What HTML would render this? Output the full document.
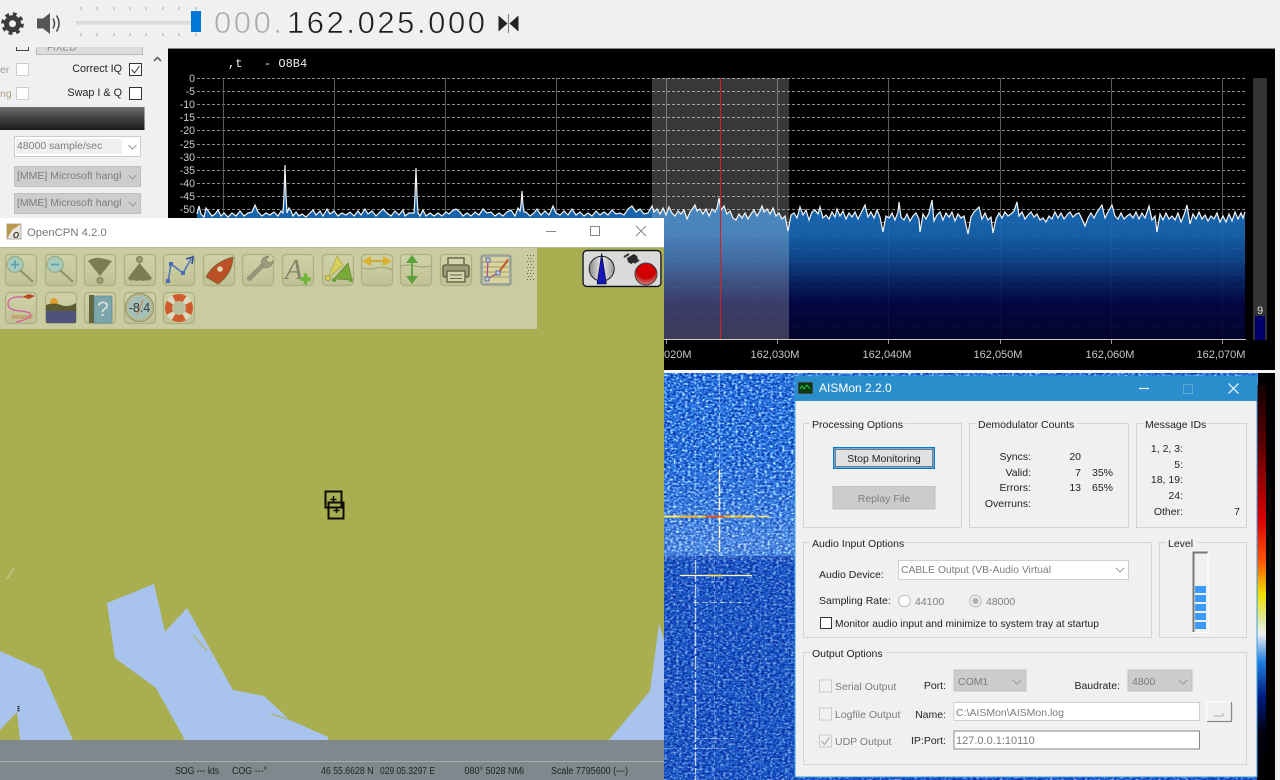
<!DOCTYPE html>
<html><head><meta charset="utf-8"><title>SDR AISMon OpenCPN</title>
<style>
html,body{margin:0;padding:0;background:#f0f0f0;width:1280px;height:780px;overflow:hidden}
svg{display:block;position:absolute;left:0;top:0;font-family:"Liberation Sans",sans-serif;filter:blur(.3px)}
.t{font-size:10.5px;fill:#222}
.g{font-size:10.5px;fill:#7c7c7c}
.a{font-size:10.6px;fill:#ccc;text-anchor:end}
.x{font-size:11px;fill:#c8c8c8;text-anchor:middle}
.s{font-size:10.500px;fill:#1c2224}
.box{fill:none;stroke:#d4d4d4}
.chev{fill:none;stroke:#999;stroke-width:1}
.ib{fill:url(#ib);stroke:#adaf80;stroke-width:1.200}
</style></head><body>
<svg width="1280" height="780" viewBox="0 0 1280 780" xmlns="http://www.w3.org/2000/svg">
<defs>
<linearGradient id="spec" x1="0" y1="200" x2="0" y2="339" gradientUnits="userSpaceOnUse">
<stop offset="0" stop-color="#1b6fbd"/><stop offset=".24" stop-color="#1766b2"/><stop offset=".42" stop-color="#0f4a92"/><stop offset=".6" stop-color="#082263"/><stop offset=".74" stop-color="#030646"/><stop offset="1" stop-color="#05052c"/>
</linearGradient>
<linearGradient id="bar" x1="0" y1="0" x2="0" y2="1"><stop offset="0" stop-color="#6d6d6d"/><stop offset=".55" stop-color="#3c3c3c"/><stop offset="1" stop-color="#1c1c1e"/></linearGradient>
<linearGradient id="ib" x1="0" y1="0" x2="0" y2="1"><stop offset="0" stop-color="#cfd1a8"/><stop offset="1" stop-color="#c0c295"/></linearGradient>
<linearGradient id="cbar" x1="0" y1="385" x2="0" y2="780" gradientUnits="userSpaceOnUse">
<stop offset="0" stop-color="#150000"/><stop offset=".14" stop-color="#550000"/><stop offset=".34" stop-color="#d80000"/><stop offset=".45" stop-color="#ff5a00"/><stop offset=".53" stop-color="#f0e000"/><stop offset=".6" stop-color="#dfe8b0"/><stop offset=".63" stop-color="#eeeeee"/><stop offset=".7" stop-color="#2080e0"/><stop offset=".79" stop-color="#001c80"/><stop offset=".88" stop-color="#000010"/><stop offset="1" stop-color="#000"/>
</linearGradient>
<linearGradient id="band" x1="0" y1="373" x2="0" y2="560" gradientUnits="userSpaceOnUse">
<stop offset="0" stop-color="#fff" stop-opacity="0"/><stop offset=".45" stop-color="#fff" stop-opacity=".01"/><stop offset=".68" stop-color="#fff" stop-opacity=".07"/><stop offset=".95" stop-color="#fff" stop-opacity=".18"/><stop offset="1" stop-color="#fff" stop-opacity=".08"/>
</linearGradient>
<radialGradient id="rd" cx=".5" cy=".25" r=".8"><stop offset="0" stop-color="#e00000"/><stop offset=".55" stop-color="#c80000"/><stop offset="1" stop-color="#d8a0a0"/></radialGradient>
<linearGradient id="gc" x1="0" x2="1" y1="0" y2="0"><stop offset="0" stop-color="#888"/><stop offset=".5" stop-color="#eee"/><stop offset="1" stop-color="#999"/></linearGradient>
<filter id="noise" x="0" y="0" width="100%" height="100%" color-interpolation-filters="sRGB">
<feTurbulence type="fractalNoise" baseFrequency="0.34 0.48" numOctaves="2" seed="7" result="n"/>
<feColorMatrix in="n" type="matrix" values="0 2.2 0 0 -0.6  0 2.2 0 0 -0.6  0 2.2 0 0 -0.6  0 0 0 0 1"/>
<feComponentTransfer>
<feFuncR type="table" tableValues="0.03 0.08 0.13 0.19 0.33 0.75"/>
<feFuncG type="table" tableValues="0.2 0.3 0.41 0.49 0.62 0.88"/>
<feFuncB type="table" tableValues="0.66 0.74 0.84 0.9 0.96 1"/>
</feComponentTransfer>
</filter>
</defs>

<!-- base -->
<rect width="1280" height="780" fill="#f0f0f0"/>

<!-- left panel -->
<rect x="16.500" y="40" width="12" height="10.500" fill="#f0f0f0" stroke="#444"/>
<rect x="36.500" y="38" width="106" height="16.500" fill="#dcdcdc" stroke="#bbb"/>
<text x="47" y="50.500" font-size="10" fill="#888">FIXED</text>
<rect x="0" y="0" width="168" height="47" fill="#f0f0f0"/>
<text x="0" y="73" font-size="10.500" fill="#9a9a9a">er</text>
<text x="0" y="97" font-size="10.500" fill="#b09a80">ng</text>
<rect x="16.500" y="63.500" width="12" height="12" fill="#fff" stroke="#ccc"/>
<rect x="16.500" y="87.500" width="12" height="12" fill="#fff" stroke="#ccc"/>
<text x="122" y="72" class="t" style="font-size:10.800px;text-anchor:end">Correct IQ</text>
<text x="122" y="96" class="t" style="font-size:10.800px;text-anchor:end">Swap I &amp; Q</text>
<rect x="129.500" y="63.500" width="12" height="12" fill="#fff" stroke="#333"/>
<path d="M131.500 69.500l3 3.500 5-7" fill="none" stroke="#333"/>
<rect x="129.500" y="87.500" width="12" height="12" fill="#fff" stroke="#333"/>
<rect x="0" y="107" width="144.500" height="23" fill="url(#bar)"/>
<rect x="14.500" y="136.500" width="126" height="20" fill="#fff" stroke="#ccc"/>
<rect x="16" y="139" width="106" height="15" fill="#f0f0f0"/>
<text x="17" y="149" class="g" style="font-size:10.500px">48000 sample/sec</text>
<path d="M128.500 145l4 4 4-4" class="chev"/>
<rect x="14.500" y="166.500" width="126" height="20" fill="#cdcdcd" stroke="#c0c0c0"/>
<text x="17" y="179" class="g" style="font-size:10.500px">[MME] Microsoft hangl</text>
<path d="M128.500 175l4 4 4-4" class="chev"/>
<rect x="14.500" y="193.500" width="126" height="20" fill="#cdcdcd" stroke="#c0c0c0"/>
<text x="17" y="206" class="g" style="font-size:10.500px">[MME] Microsoft hangl</text>
<path d="M128.500 202l4 4 4-4" class="chev"/>
<path d="M154 61l3.500-3.500 3.500 3.500" fill="none" stroke="#666" stroke-width="1.600"/>

<!-- top bar -->
<circle cx="12.500" cy="23.700" r="9.600" fill="none" stroke="#3c3c3c" stroke-width="3.400" stroke-dasharray="3.800 3.740"/>
<circle cx="12.500" cy="23.700" r="6" fill="none" stroke="#3c3c3c" stroke-width="5"/>
<circle cx="12.500" cy="23.700" r="2.600" fill="#f0f0f0"/>
<path d="M37 18.500h6l7-5.500v21l-7-5.500h-6z" fill="#555"/>
<path d="M53 18.500q3 5 0 10M56.500 15.500q5 8 0 16" fill="none" stroke="#444" stroke-width="1.500"/>
<rect x="76.500" y="21.500" width="116" height="2.500" fill="#e2e2e2" stroke="#d4d4d4"/>
<path d="M81 7v3M97 7v3M114 7v3M130 7v3M146 7v3M163 7v3M179 7v3M196 7v3M81 33v3M97 33v3M114 33v3M130 33v3M146 33v3M163 33v3M179 33v3M196 33v3" stroke="#aaa"/>
<rect x="191" y="11" width="10" height="21" fill="#0078d7"/>
<text x="214" y="33" font-size="31" fill="#ababab" stroke="#f0f0f0" stroke-width=".7" textLength="68" lengthAdjust="spacing">000.</text>
<text x="287" y="33" font-size="31" fill="#1c1c1c" stroke="#f0f0f0" stroke-width=".6" textLength="198" lengthAdjust="spacing">162.025.000</text>
<path d="M498.500 15.500l9 8-9 8zM518.500 15.500l-9 8 9 8z" fill="#222"/>
<path d="M508.500 14v19" stroke="#888" stroke-width="1.200"/>

<!-- spectrum -->
<rect x="168" y="48" width="1107" height="322" fill="#000"/>
<rect x="168" y="48" width="1107" height="1" fill="#888"/>
<g stroke="#8a8a8a" stroke-dasharray="3 2">
<path d="M197 78.500H1245M197 91.500H1245M197 104.500H1245M197 117.500H1245M197 130.500H1245M197 144.500H1245M197 157.500H1245M197 170.500H1245M197 183.500H1245M197 196.500H1245M197 209.500H1245M197 222.500H1245M197 235.500H1245M197 248.500H1245M197 261.500H1245M197 274.500H1245M197 287.500H1245M197 300.500H1245M197 313.500H1245M197 326.500H1245"/>
</g>
<path d="M223.500 78V339M334.500 78V339M445.500 78V339M556.500 78V339M666.500 78V339M777.500 78V339M888.500 78V339M1000.500 78V339M1111.500 78V339M1222.500 78V339" stroke="#5c5c5c"/>
<path fill="url(#spec)" fill-opacity=".93" stroke="none" d="M197 339L197 214 199 206 201 214 204 217 206 208 209 212 212 216 215 214 218 210 221 216 224 213 228 217 232 213 236 216 240 211 244 216 248 213 252 212 255 205 258 212 262 216 266 213 270 215 274 212 278 216 281 211 283 213 284 195 285 165 286 195 287 213 289 208 291 211 293 216 296 212 299 216 302 214 306 217 310 213 313 210 316 215 320 211 323 216 327 209 330 214 334 211 338 216 342 213 346 215 350 212 354 216 358 211 361 215 365 209 368 214 372 211 376 216 380 212 383 209 387 213 391 216 395 211 399 215 403 210 405 216 409 213 412 213 414 213 415 196 416 168 417 196 418 213 420 216 423 210 426 216 430 213 434 216 438 213 442 216 446 212 449 214 452 211 456 209 460 212 463 216 467 213 471 216 475 212 479 215 483 209 487 213 491 212 495 216 499 213 503 216 507 212 511 210 515 216 518 208 520 211 521 205 522 191 523 205 524 212 526 212 530 216 534 213 537 209 541 215 545 211 549 215 553 206 556 213 560 215 564 211 568 215 572 209 576 215 580 212 584 216 588 213 592 216 596 211 600 215 604 212 608 215 612 210 616 214 620 213 624 215 628 209 632 206 636 212 640 209 644 214 648 213 652 206 654 212 657 209 660 214 663 208 666 215 669 207 672 213 675 216 678 211 681 214 684 210 687 219 690 212 693 208 695 205 697 211 700 209 703 214 706 209 709 216 712 209 715 212 717 208 719 198 721 210 724 206 727 214 730 211 733 218 736 220 739 214 742 218 745 213 748 219 751 214 754 210 757 216 760 211 762 206 764 212 767 209 770 214 773 208 776 216 779 213 782 219 785 216 788 231 791 215 794 213 797 218 800 207 803 215 806 210 809 220 812 212 815 210 818 214 820 207 823 218 826 215 829 219 832 212 835 217 837 209 840 216 843 211 846 219 849 213 852 217 855 212 858 219 861 213 865 205 868 217 871 212 874 218 877 210 880 217 883 232 886 216 889 218 892 213 895 220 898 212 899 202 901 217 904 220 907 214 910 221 913 216 916 213 919 219 920 232 923 214 926 219 929 213 932 200 934 221 937 215 940 212 943 220 946 213 949 217 952 212 955 221 958 214 961 218 964 216 968 234 971 217 974 212 979 207 982 219 985 213 988 220 991 217 993 233 996 219 999 213 1002 218 1005 212 1008 216 1011 214 1014 211 1017 202 1019 216 1022 212 1025 219 1028 215 1031 212 1034 217 1037 214 1040 220 1043 218 1046 222 1049 216 1052 219 1055 212 1058 218 1061 213 1064 219 1067 215 1070 212 1073 217 1076 214 1079 213 1082 219 1085 226 1088 218 1091 213 1094 218 1097 212 1102 205 1105 218 1108 212 1112 205 1115 216 1118 219 1121 213 1124 219 1127 216 1130 214 1133 218 1136 212 1139 219 1142 213 1145 218 1149 206 1152 220 1155 216 1157 232 1160 214 1163 220 1166 213 1169 219 1172 216 1175 220 1178 213 1181 222 1184 215 1187 205 1190 224 1193 214 1196 219 1199 212 1202 219 1205 215 1208 221 1211 216 1214 219 1217 213 1220 222 1223 216 1226 222 1229 214 1232 221 1235 212 1238 219 1241 213 1243 218 1245 212 1245 339Z"/>
<path fill="none" stroke="#f4f4f4" stroke-width="1.200" d="M197 214L199 206 201 214 204 217 206 208 209 212 212 216 215 214 218 210 221 216 224 213 228 217 232 213 236 216 240 211 244 216 248 213 252 212 255 205 258 212 262 216 266 213 270 215 274 212 278 216 281 211 283 213 284 195 285 165 286 195 287 213 289 208 291 211 293 216 296 212 299 216 302 214 306 217 310 213 313 210 316 215 320 211 323 216 327 209 330 214 334 211 338 216 342 213 346 215 350 212 354 216 358 211 361 215 365 209 368 214 372 211 376 216 380 212 383 209 387 213 391 216 395 211 399 215 403 210 405 216 409 213 412 213 414 213 415 196 416 168 417 196 418 213 420 216 423 210 426 216 430 213 434 216 438 213 442 216 446 212 449 214 452 211 456 209 460 212 463 216 467 213 471 216 475 212 479 215 483 209 487 213 491 212 495 216 499 213 503 216 507 212 511 210 515 216 518 208 520 211 521 205 522 191 523 205 524 212 526 212 530 216 534 213 537 209 541 215 545 211 549 215 553 206 556 213 560 215 564 211 568 215 572 209 576 215 580 212 584 216 588 213 592 216 596 211 600 215 604 212 608 215 612 210 616 214 620 213 624 215 628 209 632 206 636 212 640 209 644 214 648 213 652 206 654 212 657 209 660 214 663 208 666 215 669 207 672 213 675 216 678 211 681 214 684 210 687 219 690 212 693 208 695 205 697 211 700 209 703 214 706 209 709 216 712 209 715 212 717 208 719 198 721 210 724 206 727 214 730 211 733 218 736 220 739 214 742 218 745 213 748 219 751 214 754 210 757 216 760 211 762 206 764 212 767 209 770 214 773 208 776 216 779 213 782 219 785 216 788 231 791 215 794 213 797 218 800 207 803 215 806 210 809 220 812 212 815 210 818 214 820 207 823 218 826 215 829 219 832 212 835 217 837 209 840 216 843 211 846 219 849 213 852 217 855 212 858 219 861 213 865 205 868 217 871 212 874 218 877 210 880 217 883 232 886 216 889 218 892 213 895 220 898 212 899 202 901 217 904 220 907 214 910 221 913 216 916 213 919 219 920 232 923 214 926 219 929 213 932 200 934 221 937 215 940 212 943 220 946 213 949 217 952 212 955 221 958 214 961 218 964 216 968 234 971 217 974 212 979 207 982 219 985 213 988 220 991 217 993 233 996 219 999 213 1002 218 1005 212 1008 216 1011 214 1014 211 1017 202 1019 216 1022 212 1025 219 1028 215 1031 212 1034 217 1037 214 1040 220 1043 218 1046 222 1049 216 1052 219 1055 212 1058 218 1061 213 1064 219 1067 215 1070 212 1073 217 1076 214 1079 213 1082 219 1085 226 1088 218 1091 213 1094 218 1097 212 1102 205 1105 218 1108 212 1112 205 1115 216 1118 219 1121 213 1124 219 1127 216 1130 214 1133 218 1136 212 1139 219 1142 213 1145 218 1149 206 1152 220 1155 216 1157 232 1160 214 1163 220 1166 213 1169 219 1172 216 1175 220 1178 213 1181 222 1184 215 1187 205 1190 224 1193 214 1196 219 1199 212 1202 219 1205 215 1208 221 1211 216 1214 219 1217 213 1220 222 1223 216 1226 222 1229 214 1232 221 1235 212 1238 219 1241 213 1243 218 1245 212"/>
<rect x="652" y="78" width="137" height="261" fill="#fff" fill-opacity=".22"/>
<path d="M720.500 78V339" stroke="#d82020"/>
<path d="M197 339.500H1246" stroke="#ccc"/>
<path d="M223.500 340v4M334.500 340v4M445.500 340v4M556.500 340v4M666.500 340v4M777.500 340v4M888.500 340v4M1000.500 340v4M1111.500 340v4M1222.500 340v4" stroke="#999"/>
<g>
<text x="195" y="82" class="a">0</text><text x="195" y="95" class="a">-5</text><text x="195" y="108" class="a">-10</text><text x="195" y="121" class="a">-15</text><text x="195" y="134" class="a">-20</text><text x="195" y="148" class="a">-25</text><text x="195" y="161" class="a">-30</text><text x="195" y="174" class="a">-35</text><text x="195" y="187" class="a">-40</text><text x="195" y="200" class="a">-45</text><text x="195" y="213" class="a">-50</text>
</g>
<text x="228" y="67" font-size="12" fill="#eee" xml:space="preserve" style="white-space:pre;font-family:'Liberation Mono',monospace">,t   - O8B4</text>
<text x="775" y="358" class="x">162,030M</text><text x="887" y="358" class="x">162,040M</text><text x="998" y="358" class="x">162,050M</text><text x="1110" y="358" class="x">162,060M</text><text x="1221" y="358" class="x">162,070M</text>
<text x="664" y="358" fill="#c8c8c8" font-size="11">020M</text>
<rect x="1253" y="78" width="14" height="262" fill="#333"/>
<rect x="1255" y="316" width="10" height="24" fill="#00006a"/>
<text x="1260" y="314" text-anchor="middle" font-size="11" fill="#ddd">9</text>

<!-- right divider + waterfall -->
<rect x="664" y="370" width="616" height="3" fill="#f4f4f4"/>
<rect x="664" y="373" width="611" height="407" fill="#000"/>
<rect x="664" y="373" width="594" height="407" filter="url(#noise)"/>
<rect x="664" y="373" width="594" height="187" fill="url(#band)"/>
<rect x="664" y="556" width="594" height="224" fill="#00158a" opacity=".28"/>
<rect x="1257" y="385" width="9" height="395" fill="url(#cbar)"/>
<rect x="1275" y="373" width="5" height="407" fill="#f0f0f0"/>
<rect x="1275" y="48" width="5" height="325" fill="#f4f4f4"/>
<g fill="none">
<path d="M695.500 373V560" stroke="#9cc4f8" stroke-dasharray="4 3" opacity=".45"/>
<path d="M695.500 560V780" stroke="#e6f0ff" stroke-width="1.400" stroke-dasharray="14 2 6 2" opacity=".8"/>
<path d="M719.500 373V470" stroke="#c8dcf8" stroke-dasharray="5 3" opacity=".6"/>
<path d="M719.500 470V555" stroke="#fdfadc" stroke-width="1.500" stroke-dasharray="12 2"/>
<path d="M714.500 560V780" stroke="#8ab8f4" stroke-dasharray="4 4" opacity=".6"/>
<path d="M677.500 560V780M760.500 560V780M788.500 560V780" stroke="#6fa2ea" stroke-dasharray="5 4" opacity=".4"/>
<path d="M664 516.500H755" stroke="#ffe868" stroke-width="2"/>
<path d="M680 516.500H745" stroke="#ffb020" stroke-width="1.800" stroke-dasharray="18 4 8 3"/>
<path d="M706 516.500H724" stroke="#e84a20" stroke-width="1.800"/>
<path d="M758 516.500H769" stroke="#ffe27a" stroke-width="1.500"/>
<path d="M680 575.500H752" stroke="#fff4c0" stroke-width="1.300"/>
<path d="M708 575.500H722" stroke="#ffdc50" stroke-width="1.600"/>
<path d="M693 602.500H742" stroke="#eaf0e0" stroke-dasharray="6 3" opacity=".6"/>
<path d="M695 738.500H735M693 748.500H725" stroke="#dce8ff" stroke-dasharray="5 2" opacity=".5"/>
</g>

<!-- OpenCPN window -->
<rect x="0" y="218" width="664" height="29" fill="#fff"/>
<rect x="0" y="247" width="664" height="533" fill="#a9af50"/>
<rect x="0" y="247" width="664" height="1" fill="#b8bb90"/>
<rect x="7" y="224" width="14" height="15" fill="#e8e4d8" stroke="#999" stroke-width=".8"/>
<path d="M7 224h14l-9 6-5 9z" fill="#b89850"/>
<text x="13" y="238" font-size="11" font-style="italic" fill="#111">o</text>
<text x="27" y="236" font-size="11.300" fill="#767676">OpenCPN 4.2.0</text>
<path d="M546 231.500H556" stroke="#888"/>
<rect x="590.500" y="226.500" width="9" height="9" fill="none" stroke="#888"/>
<path d="M636 226l10 10M646 226l-10 10" stroke="#888"/>

<!-- map -->
<g fill="#a9c3ef">
<path d="M107 603L154 584 165 632 187 608 233 690 264 696 290 720 328 737 328 740 185 740 156 688 115 658Z"/>
<path d="M0 651L42 670 73 740 20 740 17 712 0 730Z"/>
<path d="M609 740L650 691 659 624 664 640V740Z"/>
</g>
<path d="M193 635L207 651M271 714L291 720" stroke="#a9af50"/>
<path d="M7 579L14 568" stroke="#cdd6a8" stroke-width=".8"/>
<path d="M18.500 706v6" stroke="#222" stroke-width="2" stroke-dasharray="1.200 .8"/>
<g fill="none" stroke="#0c0c08" stroke-width="2">
<rect x="325.500" y="491.500" width="16" height="16"/>
<rect x="328.500" y="502.500" width="15" height="16"/>
</g>
<path d="M333.500 496v6M330.500 499.500h6M336.500 507v6M333.500 510.500h6" stroke="#0c0c08" stroke-width="1.400"/>

<!-- status -->
<rect x="0" y="740" width="664" height="40" fill="#7f898d"/>
<rect x="0" y="761" width="664" height="1" fill="#a8aeb0"/>
<text x="175" y="774" class="s" textLength="44" lengthAdjust="spacingAndGlyphs">SOG --- kts</text>
<text x="232" y="774" class="s" textLength="35" lengthAdjust="spacingAndGlyphs">COG ---°</text>
<text x="321" y="774" class="s" textLength="52.500" lengthAdjust="spacingAndGlyphs">46 55.6628 N</text>
<text x="380" y="774" class="s" textLength="55" lengthAdjust="spacingAndGlyphs">029 05.3297 E</text>
<text x="464.500" y="774" class="s" textLength="59.500" lengthAdjust="spacingAndGlyphs">080°  5028 NMi</text>
<text x="551" y="774" class="s" textLength="77" lengthAdjust="spacingAndGlyphs">Scale 7795600 (---)</text>

<!-- toolbar -->
<rect x="0" y="248" width="537" height="81" fill="#c9cba0"/>
<g transform="translate(5,254)"><rect class="ib" x=".5" y=".5" width="31" height="31" rx="4"/><circle cx="10" cy="10.500" r="8" fill="#a7cbbc" stroke="#9cae8c" stroke-width="1.500"/><path d="M15.500 16.500L28 28" stroke="#8e8f6c" stroke-width="2"/><path d="M6 10.500h8M10 6.500v8" stroke="#5c9fac" stroke-width="1.800"/></g>
<g transform="translate(45,254)"><rect class="ib" x=".5" y=".5" width="31" height="31" rx="4"/><circle cx="10" cy="10.500" r="8" fill="#a7cbbc" stroke="#9cae8c" stroke-width="1.500"/><path d="M15.500 16.500L28 28" stroke="#8e8f6c" stroke-width="2"/><path d="M6 10.500h8" stroke="#5c9fac" stroke-width="1.800"/></g>
<g transform="translate(84,254)"><rect class="ib" x=".5" y=".5" width="31" height="31" rx="4"/><path d="M4 7q6-4 12-3t12 3L16 22z" fill="#7b7c52"/><circle cx="16" cy="26.500" r="3" fill="#9fa078" stroke="#7b7c52"/></g>
<g transform="translate(124,254)"><rect class="ib" x=".5" y=".5" width="31" height="31" rx="4"/><circle cx="15.500" cy="5.500" r="3" fill="#9fa078" stroke="#7b7c52"/><path d="M15.500 9L28 24q-3 4-6 2-3 2-6 0-3 2-6 0-4 2-6-2z" fill="#7b7c52"/></g>
<g transform="translate(163,254)"><rect class="ib" x=".5" y=".5" width="31" height="31" rx="4"/><path d="M5 28L8 10 20 19 28 5" fill="none" stroke="#4e73b8" stroke-width="1.500"/><path d="M23 5l7-2-1 7" fill="none" stroke="#2d4d90" stroke-width="1.600"/><rect x="3" y="25" width="4" height="4" fill="#4c6cb4"/><rect x="6" y="8" width="4" height="4" fill="#4c6cb4"/><rect x="18" y="17" width="4" height="4" fill="#4c6cb4"/></g>
<g transform="translate(203,254)"><rect class="ib" x=".5" y=".5" width="31" height="31" rx="4"/><path d="M3 23C8 13 18 6 30 3c0 11-6 21-15 27z" fill="#bb5026" stroke="#7d6a3c" stroke-width=".8"/><circle cx="17" cy="15" r="2.800" fill="#d8d6b4"/></g>
<g transform="translate(242,254)"><rect class="ib" x=".5" y=".5" width="31" height="31" rx="4"/><path d="M6 26L21 11" stroke="#96977a" stroke-width="5"/><path d="M19 8q2-6 8-6l-3 4 3 3 4-2q-1 7-8 7z" fill="#9c9d7e" stroke="#7e7f60" stroke-width=".6"/></g>
<g transform="translate(282,254)"><rect class="ib" x=".5" y=".5" width="31" height="31" rx="4"/><text x="3" y="25" font-family="Liberation Serif" font-style="italic" font-size="29" fill="#85866a">A</text><path d="M18 25h11M23.500 19.500v11" stroke="#6db63a" stroke-width="3.600"/></g>
<g transform="translate(322,254)"><rect class="ib" x=".5" y=".5" width="31" height="31" rx="4"/><path d="M6 24L15 2l6 9z" fill="#d8d058" stroke="#a0a050" stroke-width=".6"/><path d="M12 25L26 9l4 17z" fill="#7aa83a" stroke="#608030" stroke-width=".6"/><circle cx="6" cy="24" r="2.500" fill="#d8d24a" stroke="#7a7a40" stroke-width=".6"/><circle cx="12" cy="26" r="2" fill="#6aa030"/><circle cx="29" cy="26" r="2" fill="#6aa030"/></g>
<g transform="translate(361,254)"><rect class="ib" x=".5" y=".5" width="31" height="31" rx="4"/><path d="M1 14q8 2 15 0t15 2" fill="none" stroke="#9c9d72"/><path d="M10 7H22" stroke="#d0a428" stroke-width="1.800"/><path d="M1 7l9-5v10zM31 7l-9-5v10z" fill="#dcb030"/></g>
<g transform="translate(400,254)"><rect class="ib" x=".5" y=".5" width="31" height="31" rx="4"/><path d="M1 12q8-2 15 0t15 0" fill="none" stroke="#9c9d72"/><path d="M6 9l6-8 6 8zM6 22l6 8 6-8z" fill="#5ca03c"/><path d="M12 9V22" stroke="#5ca03c" stroke-width="1.800"/></g>
<g transform="translate(440,254)"><rect class="ib" x=".5" y=".5" width="31" height="31" rx="4"/><rect x="8" y="4" width="16" height="9" fill="#d4d5ac" stroke="#68694a" stroke-width="1.500"/><rect x="3" y="11" width="26" height="12" rx="2" fill="#9b9c78" stroke="#68694a" stroke-width="1.600"/><rect x="7" y="17" width="18" height="11" fill="#d4d5ac" stroke="#68694a" stroke-width="1.500"/><path d="M10 21h12M10 24.500h12" stroke="#68694a"/></g>
<g transform="translate(480,254)"><rect class="ib" x=".5" y=".5" width="31" height="31" rx="4"/><rect x="2" y="2" width="28" height="28" fill="#d8d49c" stroke="#7f8fb0" stroke-width="1.300"/><path d="M3 8H29M3 13H29M3 18H29M3 23H29" stroke="#9d9b74"/><path d="M8 6L7 25 18 19 28 5" fill="none" stroke="#a84880" stroke-width="1.200"/><path d="M19 18L28 6" stroke="#c85a28" stroke-width="2"/><rect x="6" y="4" width="4" height="4" fill="#ccd" stroke="#5b6ea0"/><rect x="5" y="23" width="4" height="4" fill="#ccd" stroke="#5b6ea0"/><rect x="16" y="17" width="4" height="4" fill="#ccd" stroke="#5b6ea0"/></g>
<g fill="#666848"><path d="M527 255h1v1h-1zM530 255h1v1h-1zM533 255h1v1h-1zM528 258h1v1h-1zM531 258h1v1h-1zM527 261h1v1h-1zM530 261h1v1h-1zM533 261h1v1h-1zM528 264h1v1h-1zM531 264h1v1h-1zM527 267h1v1h-1zM530 267h1v1h-1zM533 267h1v1h-1zM528 270h1v1h-1zM531 270h1v1h-1zM527 273h1v1h-1zM530 273h1v1h-1zM533 273h1v1h-1zM528 276h1v1h-1zM531 276h1v1h-1zM527 279h1v1h-1zM530 279h1v1h-1zM533 279h1v1h-1z"/></g>

<g transform="translate(5,292)"><rect class="ib" x=".5" y=".5" width="31" height="31" rx="4"/><path d="M6 23h22l-1 4H7z" fill="#c0a672"/><path d="M18 5Q4 4 3 11t12 8 10 5-14 6" fill="none" stroke="#d858a0" stroke-width="1.300"/><path d="M17 5l7-3 6 2-6 3z" fill="#bb4a22"/></g>
<g transform="translate(45,292)"><rect class="ib" x=".5" y=".5" width="31" height="31" rx="4"/><circle cx="9" cy="10" r="4" fill="#e0a030"/><path d="M1 13q8-3 15 0t15-2v20H1z" fill="#5c5a30"/><path d="M1 19h30v8q0 4-4 4H5q-4 0-4-4z" fill="#50527e"/></g>
<g transform="translate(84,292)"><rect class="ib" x=".5" y=".5" width="31" height="31" rx="4"/><path d="M5 3h5v28H5z" fill="#63653e"/><path d="M10 4h18v27H10z" fill="#7ba6ac" stroke="#5c7f88" stroke-width=".6"/><text x="13" y="24" font-size="21" fill="#d8e4d8">?</text></g>
<g transform="translate(124,292)"><rect class="ib" x=".5" y=".5" width="31" height="31" rx="4"/><circle cx="15.500" cy="15.500" r="14" fill="#b8b98e" stroke="#90916a"/><circle cx="15.500" cy="15.500" r="11.500" fill="#a4c0b8"/><path d="M19 8L13 23" stroke="#d87838"/><text x="15.500" y="20" text-anchor="middle" font-size="12.500" fill="#3a3a34">-8.4</text></g>
<g transform="translate(163,292)"><rect class="ib" x=".5" y=".5" width="31" height="31" rx="4"/><circle cx="16" cy="16" r="7" fill="#bcbea0"/><circle cx="16" cy="16" r="10.500" fill="none" stroke="#dad9c0" stroke-width="7"/><circle cx="16" cy="16" r="10.500" fill="none" stroke="#cf5a2c" stroke-width="7" stroke-dasharray="11 5.500" stroke-dashoffset="-11"/></g>

<!-- record widget -->
<rect x="582" y="249.500" width="80" height="38" rx="5" fill="#d8d9b0"/>
<rect x="583" y="250.500" width="78" height="36" rx="4" fill="#dadada" stroke="#111" stroke-width="1.400"/>
<circle cx="601.700" cy="268.700" r="12.500" fill="url(#gc)" stroke="#222"/>
<path d="M601.700 253L597 284H606.500z" fill="#1414b8" stroke="#000" stroke-width=".5"/>
<path d="M627 258l7-4 3 2 1 4-7 4-3-2z" fill="#2a2a2a"/><path d="M624 257l5-3M634 263l5-3" stroke="#333" stroke-width="2"/>
<circle cx="646" cy="274" r="11" fill="url(#rd)" stroke="#444"/>

<!-- AISMon -->
<rect x="795" y="376" width="462" height="401" fill="#f0f0f0" stroke="#3aa0e0"/>
<rect x="795" y="376" width="462" height="25" fill="#2a8ecc"/>
<rect x="798.500" y="382.500" width="14" height="11" rx="1" fill="#0a3a10" stroke="#444"/>
<path d="M800 389l2-3 2 3 3-4 3 4" fill="none" stroke="#30e040" stroke-width=".8"/>
<text x="819" y="392" font-size="12" fill="#fff">AISMon 2.2.0</text>
<path d="M1139 388.500H1149" stroke="#fff" stroke-width="1.200"/>
<rect x="1183.500" y="384.500" width="9" height="9" fill="none" stroke="#5aaad8"/>
<path d="M1228.500 383.500l10 10M1238.500 383.500l-10 10" stroke="#fff" stroke-width="1.200"/>

<g class="box">
<rect x="803.500" y="423.500" width="158" height="104"/>
<rect x="969.500" y="423.500" width="159" height="104"/>
<rect x="1136.500" y="423.500" width="110" height="104"/>
<rect x="803.500" y="542.500" width="348" height="95"/>
<rect x="1159.500" y="542.500" width="87" height="95"/>
<rect x="803.500" y="652.500" width="443" height="112"/>
</g>
<rect x="810" y="420" width="95" height="8" fill="#f0f0f0"/>
<rect x="976" y="420" width="101" height="8" fill="#f0f0f0"/>
<rect x="1143" y="420" width="64" height="8" fill="#f0f0f0"/>
<rect x="810" y="539" width="95" height="8" fill="#f0f0f0"/>
<rect x="1166" y="539" width="32" height="8" fill="#f0f0f0"/>
<rect x="810" y="649" width="76" height="8" fill="#f0f0f0"/>
<text x="812" y="428" class="t">Processing Options</text>
<text x="978" y="428" class="t">Demodulator Counts</text>
<text x="1145" y="428" class="t">Message IDs</text>
<text x="812" y="547" class="t">Audio Input Options</text>
<text x="1168" y="547" class="t">Level</text>
<text x="812" y="657" class="t">Output Options</text>

<rect x="833" y="447" width="102" height="22" fill="#0078d7"/>
<rect x="834.500" y="448.500" width="99" height="19" fill="#e1e1e1"/>
<rect x="835.500" y="449.500" width="97" height="17" fill="none" stroke="#111" stroke-dasharray="1 1"/>
<text x="884" y="462" class="t" text-anchor="middle">Stop Monitoring</text>
<rect x="833" y="486.500" width="102" height="22.500" fill="#cccccc" stroke="#bfbfbf"/>
<text x="884" y="502" class="g" text-anchor="middle">Replay File</text>

<g text-anchor="end">
<text x="1031" y="460" class="t">Syncs:</text><text x="1031" y="476" class="t">Valid:</text><text x="1031" y="491" class="t">Errors:</text><text x="1031" y="507" class="t">Overruns:</text>
<text x="1081" y="460" class="t">20</text><text x="1081" y="476" class="t">7</text><text x="1081" y="491" class="t">13</text>
<text x="1113" y="476" class="t">35%</text><text x="1113" y="491" class="t">65%</text>
<text x="1183" y="452" class="t">1, 2, 3:</text><text x="1183" y="468" class="t">5:</text><text x="1183" y="483" class="t">18, 19:</text><text x="1183" y="499" class="t">24:</text><text x="1183" y="515" class="t">Other:</text>
<text x="1240" y="515" class="t">7</text>
</g>

<text x="819" y="578" class="t">Audio Device:</text>
<rect x="898.500" y="560.500" width="230" height="19" fill="#fff" stroke="#cfcfcf"/>
<text x="901" y="573" class="g" textLength="150" lengthAdjust="spacingAndGlyphs">CABLE Output (VB-Audio Virtual</text>
<path d="M1116 568l4 4 4-4" class="chev" stroke="#777"/>
<text x="819" y="604" class="t">Sampling Rate:</text>
<circle cx="904.500" cy="601" r="5.800" fill="#fff" stroke="#bbb"/>
<text x="915" y="605" class="g">44100</text>
<circle cx="975.500" cy="601" r="5.800" fill="#f0f0f0" stroke="#bbb"/><circle cx="975.500" cy="601" r="3" fill="#b0b0b0"/>
<text x="986" y="605" class="g">48000</text>
<rect x="820.500" y="617.500" width="11" height="11" fill="#fff" stroke="#333"/>
<text x="835" y="627" class="t" textLength="264" lengthAdjust="spacingAndGlyphs">Monitor audio input and minimize to system tray at startup</text>

<path d="M1193.500 632V552.500H1207.500" fill="none" stroke="#777" stroke-width="2"/>
<path d="M1194 632.500H1208V553" fill="none" stroke="#fff"/>
<g fill="#3a9bf8">
<rect x="1195" y="586" width="11" height="7"/><rect x="1195" y="595" width="11" height="7"/><rect x="1195" y="604" width="11" height="7"/><rect x="1195" y="613" width="11" height="7"/><rect x="1195" y="622" width="11" height="7"/>
</g>

<rect x="819.500" y="680" width="12" height="12" fill="#f0f0f0" stroke="#ccc"/>
<text x="835" y="690" class="g">Serial Output</text>
<text x="946" y="689" class="t" text-anchor="end">Port:</text>
<rect x="954" y="670" width="72" height="21" fill="#cccccc" stroke="#c0c0c0"/>
<text x="958" y="685" class="g">COM1</text>
<path d="M1013 680l4 4 4-4" class="chev"/>
<text x="1120" y="689" class="t" text-anchor="end">Baudrate:</text>
<rect x="1128" y="670" width="64" height="21" fill="#cccccc" stroke="#c0c0c0"/>
<text x="1132" y="685" class="g">4800</text>
<path d="M1179 680l4 4 4-4" class="chev"/>

<rect x="819.500" y="708" width="12" height="12" fill="#f0f0f0" stroke="#ccc"/>
<text x="835" y="718" class="g">Logfile Output</text>
<text x="946" y="718" class="t" text-anchor="end">Name:</text>
<rect x="954" y="702.500" width="245.500" height="18" fill="#fff" stroke="#cfcfcf"/>
<text x="956" y="716" class="g">C:\AISMon\AISMon.log</text>
<rect x="1207" y="702" width="24" height="19" fill="#f0f0f0" stroke="#fff"/>
<path d="M1231.500 702V721.500H1207" fill="none" stroke="#888" stroke-width="1.300"/>
<path d="M1214 716h9M1223 713v3" stroke="#aaa"/>

<rect x="819.500" y="735" width="12" height="12" fill="#f0f0f0" stroke="#ccc"/>
<path d="M821.500 741l3 3.500 5-7" fill="none" stroke="#aaa" stroke-width="1.100"/>
<text x="835" y="745" class="g">UDP Output</text>
<text x="946" y="744" class="t" text-anchor="end">IP:Port:</text>
<rect x="954" y="731" width="245.500" height="18" fill="#fff" stroke="#888"/>
<text x="956" y="744" class="g" style="font-size:11px">127.0.0.1:10110</text>
</svg>
</body></html>
